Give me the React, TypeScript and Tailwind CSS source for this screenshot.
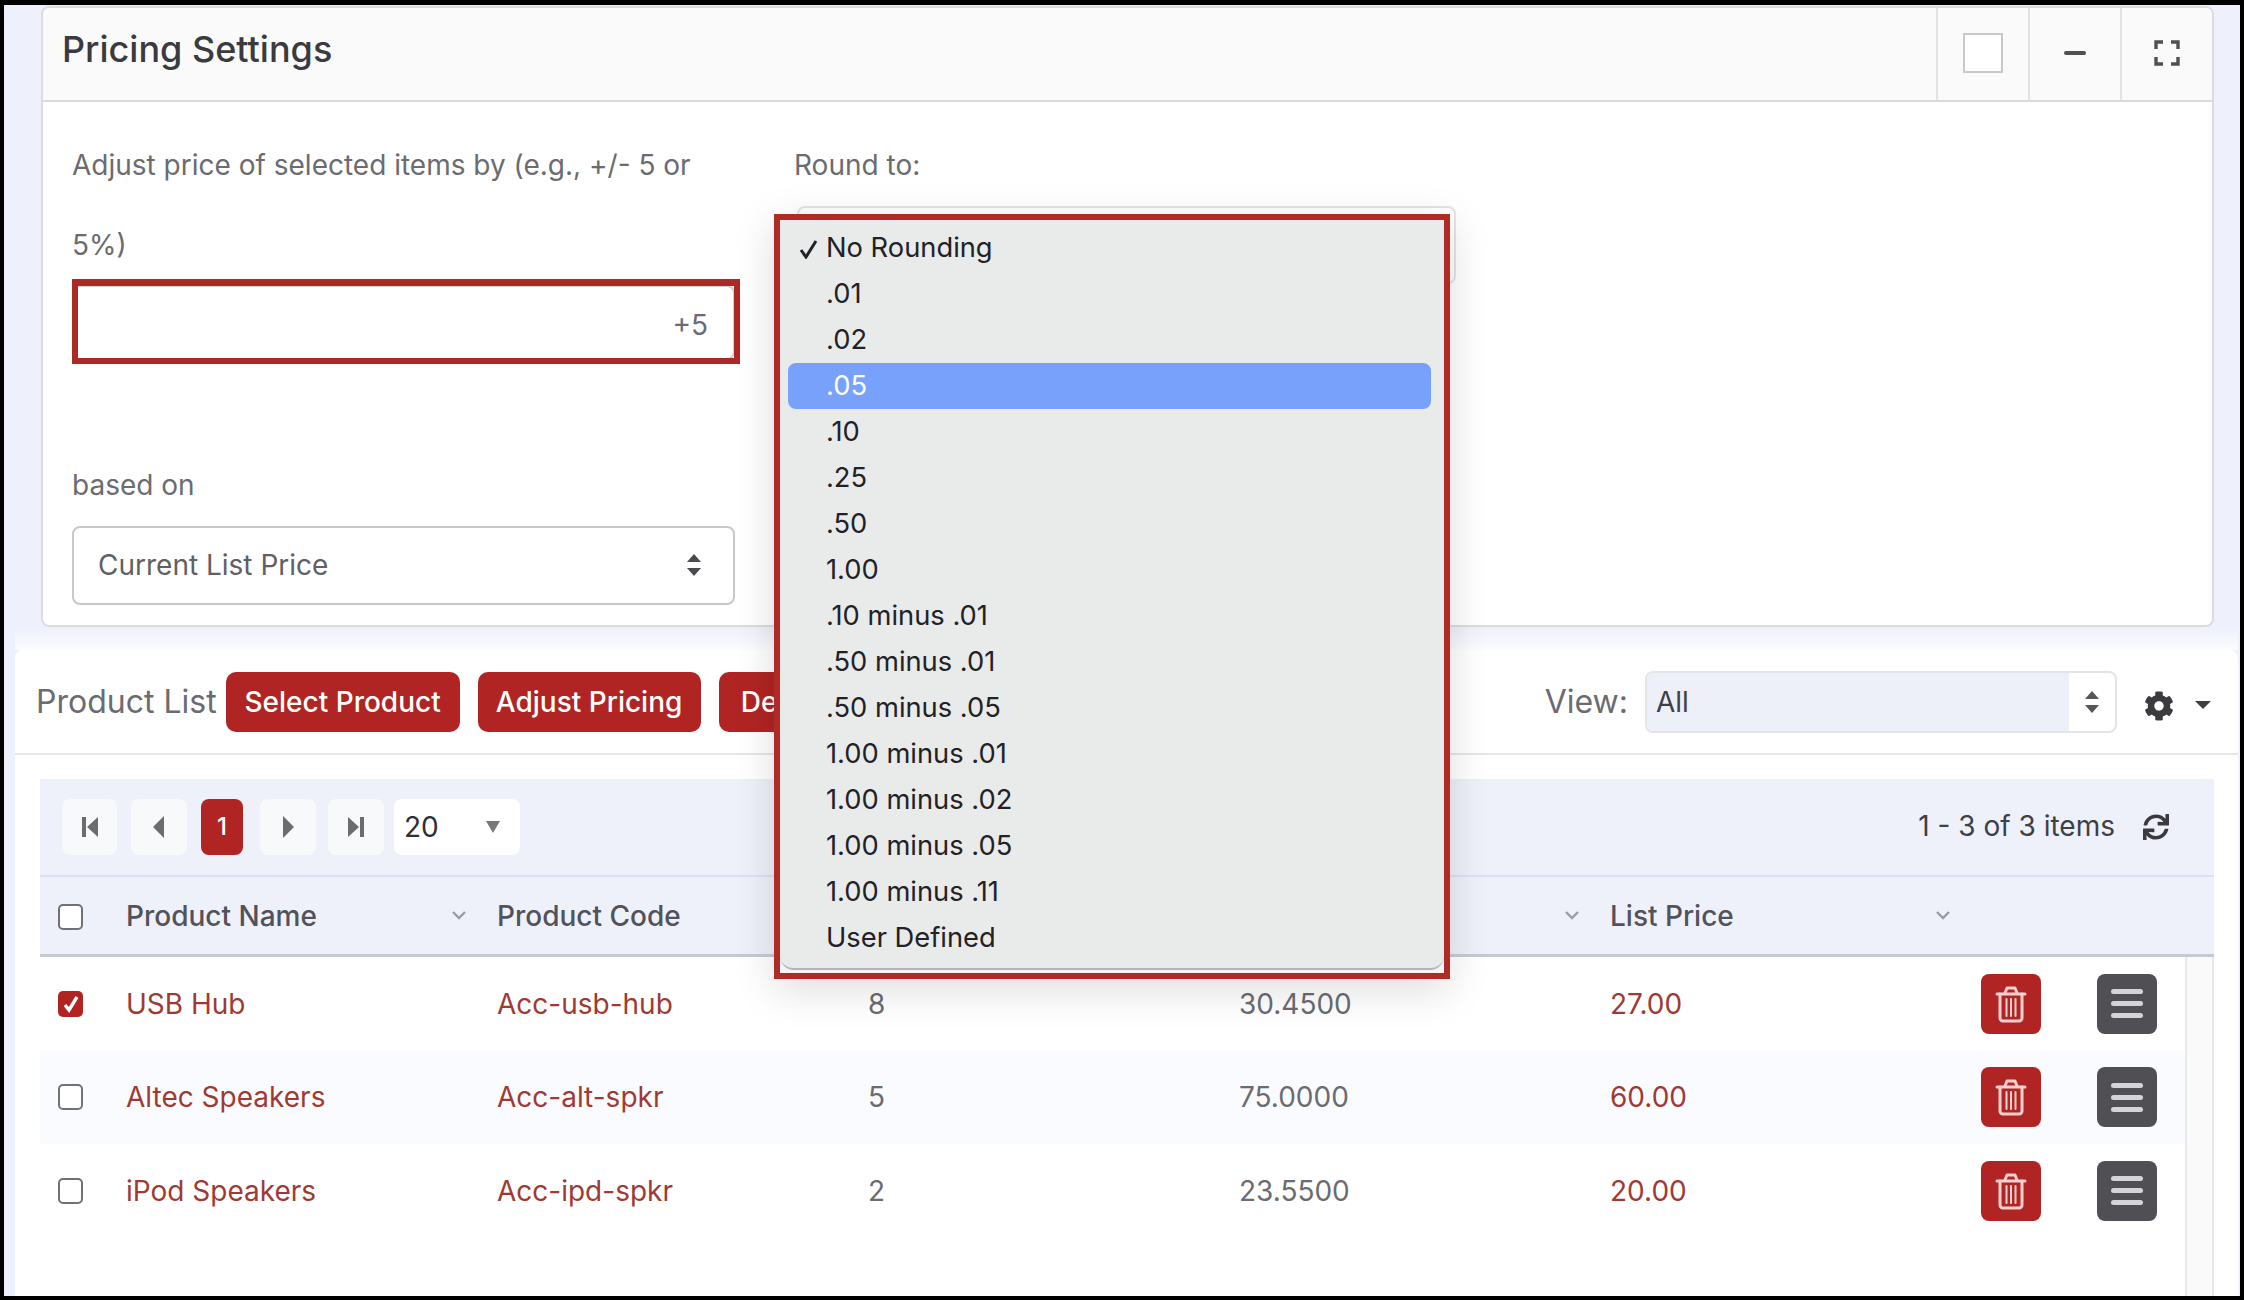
import { FaCog, FaSync } from 'react-icons/fa';

const options = [
  'No Rounding', '.01', '.02', '.05', '.10', '.25', '.50', '1.00', '.10 minus .01', '.50 minus .01',
  '.50 minus .05', '1.00 minus .01', '1.00 minus .02', '1.00 minus .05', '1.00 minus .11', 'User Defined',
];

const products = [
  { name: 'USB Hub', code: 'Acc-usb-hub', qty: '8', cost: '30.4500', price: '27.00', checked: true },
  { name: 'Altec Speakers', code: 'Acc-alt-spkr', qty: '5', cost: '75.0000', price: '60.00', checked: false },
  { name: 'iPod Speakers', code: 'Acc-ipd-spkr', qty: '2', cost: '23.5500', price: '20.00', checked: false },
];

function UpDown({ className }: { className?: string }) {
  return (
    <svg width="16" height="22" viewBox="0 0 16 22" className={className} fill="currentColor">
      <path d="M8 0l7 8H1zM8 22l-7-8h14z" />
    </svg>
  );
}

function Chevron() {
  return (
    <svg width="14" height="9" viewBox="0 0 14 9" fill="none" stroke="#9b9ba0" strokeWidth="2.4">
      <path d="M1 1l6 6 6-6" />
    </svg>
  );
}

function PagerIcon({ d }: { d: string }) {
  return (
    <svg width="20" height="22" viewBox="0 0 20 22" fill="#6b6b70">
      <path d={d} />
    </svg>
  );
}

function Checkbox({ checked }: { checked: boolean }) {
  if (checked) {
    return (
      <div className="grid h-[26px] w-[25px] place-items-center rounded-[5px] bg-[#b02523]">
        <svg width="18" height="18" viewBox="0 0 18 18" fill="none" stroke="white" strokeWidth="3.4">
          <path d="M3 10l4 5 8-13" />
        </svg>
      </div>
    );
  }
  return <div className="h-[26px] w-[25px] rounded-[5px] border-2 border-[#707075] bg-white" />;
}

function Trash() {
  return (
    <svg width="32" height="38" viewBox="0 0 32 38" fill="none" stroke="#f7d0cf" strokeWidth="3" strokeLinecap="round" strokeLinejoin="round">
      <path d="M2 9h28" />
      <path d="M10 8l2-5h8l2 5" />
      <path d="M5 9v24a3 3 0 0 0 3 3h16a3 3 0 0 0 3-3V9" />
      <path d="M11.5 14v17M16 14v17M20.5 14v17" strokeWidth="2" />
    </svg>
  );
}

export default function App() {
  return (
    <div className="relative h-[1300px] w-[2244px] overflow-hidden bg-black pb-[4px] pl-[4px] pr-[4px] pt-[5px] font-['Inter',sans-serif]">
      <div className="h-full bg-[#eef1fb] pt-[1px]">

        {/* Pricing Settings card */}
        <div className="ml-[37px] mr-[26px] h-[621px] rounded-lg border-2 border-[#dcdce0] bg-white">
          <div className="flex h-[94px] items-stretch rounded-t-lg border-b-2 border-[#d9d9dc] bg-[#fafafa]">
            <div className="flex-1 pl-[19px] pt-[19px] text-[36px] leading-[44px] font-medium text-[#3a3a3f]">Pricing Settings</div>
            <div className="grid w-[92px] place-items-center border-l-2 border-[#e2e2e4] pb-[2px]">
              <div className="h-[40px] w-[40px] border-2 border-[#c8c8c8] bg-white" />
            </div>
            <div className="grid w-[92px] place-items-center border-l-2 border-[#e2e2e4] pb-[2px]">
              <div className="h-[4px] w-[22px] rounded-sm bg-[#4f4f54]" />
            </div>
            <div className="grid w-[92px] place-items-center border-l-2 border-[#e2e2e4] pb-[2px]">
              <svg width="26" height="26" viewBox="0 0 26 26" fill="none" stroke="#4f4f54" strokeWidth="3.4">
                <path d="M2 9V2h7M17 2h7v7M24 17v7h-7M9 24H2v-7" />
              </svg>
            </div>
          </div>

          <div className="flex pl-[29px] pt-[23px] text-[28px] leading-[80px] text-[#6b6b70]">
            <div className="w-[663px]">
              <div>Adjust price of selected items by (e.g., +/- 5 or 5%)</div>
              <div className="relative flex h-[75px] items-center justify-end rounded-lg border-2 border-[#d0d0d4] bg-white pr-[25px] pt-[4px]">
                +5
                <div className="pointer-events-none absolute -bottom-[6px] -left-[2px] -right-[7px] -top-[8px] border-[6px] border-t-[7px] border-[#ac2a25]" />
              </div>
              <div className="mt-[85px]">based on</div>
              <div className="mt-[1px] flex h-[79px] items-center justify-between rounded-lg border-2 border-[#c8c8cc] bg-white pb-[2px] pl-[24px] pr-[31px] text-[#5f5f64]">
                Current List Price
                <UpDown className="text-[#4a4a4f]" />
              </div>
            </div>
            <div className="ml-[59px] w-[662px]">
              <div>Round to:</div>
              <div className="ml-[3px] mt-[1px] h-[78px] rounded-lg border-2 border-[#e4e4e6] bg-white" />
            </div>
          </div>
        </div>

        {/* fade from the page colour into the panel */}
        <div className="ml-[11px] mr-[2px] h-[23px] bg-gradient-to-b from-[#eef1fb] to-[#fbfcfe]" />

        {/* Product list panel */}
        <div className="ml-[11px] mr-[2px] rounded-t-lg bg-white">
          <div className="flex h-[105px] items-center border-b-2 border-[#e6e6e8] pl-[21px] pt-[1px] text-[28px]">
            <span className="text-[32px] text-[#6b6b70]">Product List</span>
            <button className="ml-[9px] h-[60px] w-[234px] rounded-[10px] bg-[#b02523] font-medium text-white">Select Product</button>
            <button className="ml-[18px] h-[60px] w-[223px] rounded-[10px] bg-[#b02523] font-medium text-white">Adjust Pricing</button>
            <button className="ml-[18px] h-[60px] w-[130px] rounded-[10px] bg-[#b02523] font-medium text-white">Delete</button>
            <div className="ml-auto flex items-center pr-[27px]">
              <span className="text-[32px] text-[#6b6b70]">View:</span>
              <div className="ml-[17px] flex h-[62px] w-[472px] items-stretch overflow-hidden rounded-lg border-2 border-[#e4e4e8] bg-white">
                <div className="flex flex-1 items-center bg-[#eef0f9] pl-[9px] text-[#3f3f46]">All</div>
                <div className="grid w-[46px] place-items-center">
                  <UpDown className="text-[#55555a]" />
                </div>
              </div>
              <FaCog size={30} className="ml-[27px] mt-[8px] text-[#3a3a3f]" />
              <svg width="16" height="8" viewBox="0 0 16 8" fill="#3f3f46" className="ml-[21px] mt-[6px]">
                <path d="M0 0h16L8 8z" />
              </svg>
            </div>
          </div>

          <div className="h-[541px] rounded-t-lg bg-white pl-[25px] pr-[24px] pt-[24px] text-[28px]">
            {/* pager */}
            <div className="flex h-[98px] items-center border-b-2 border-[#dde1f5] bg-[#eef1fa] pl-[22px] pr-[45px]">
              <div className="grid h-[56px] w-[55px] place-items-center rounded-lg bg-[#f8f9fb]">
                <PagerIcon d="M2 1h4v20H2zM18 1v20L7 11z" />
              </div>
              <div className="ml-[14px] grid h-[56px] w-[56px] place-items-center rounded-lg bg-[#f8f9fb]">
                <PagerIcon d="M15 0v22L4 11z" />
              </div>
              <div className="ml-[14px] grid h-[56px] w-[42px] place-items-center rounded-lg bg-[#b02523] text-[24px] font-medium text-white">1</div>
              <div className="ml-[17px] grid h-[56px] w-[56px] place-items-center rounded-lg bg-[#f8f9fb]">
                <PagerIcon d="M5 0v22l11-11z" />
              </div>
              <div className="ml-[12px] grid h-[56px] w-[56px] place-items-center rounded-lg bg-[#f8f9fb]">
                <PagerIcon d="M2 1v20l11-10zM14 1h4v20h-4z" />
              </div>
              <div className="ml-[10px] flex h-[56px] w-[126px] items-center justify-between rounded-lg bg-white pl-[10px] pr-[20px] text-[#2f2f33]">
                20
                <svg width="14" height="12" viewBox="0 0 14 12" fill="#77777c">
                  <path d="M0 0h14L7 12z" />
                </svg>
              </div>
              <span className="ml-auto mb-[3px] text-[#3f3f46]">1 - 3 of 3 items</span>
              <FaSync size={26} className="ml-[28px] text-[#3a3a3f]" />
            </div>

            {/* column headers */}
            <div className="grid h-[80px] grid-cols-[86px_371px_371px_371px_371px_371px_1fr] items-center border-b-[3px] border-[#c8cad2] bg-[#eef1fa] font-medium text-[#52525b]">
              <div className="pl-[18px] pt-[2px]"><Checkbox checked={false} /></div>
              <div className="flex items-center justify-between pr-[31px]">Product Name<Chevron /></div>
              <div>Product Code</div>
              <div />
              <div className="flex justify-end pr-[31px]"><Chevron /></div>
              <div className="flex items-center justify-between pr-[31px]">List Price<Chevron /></div>
            </div>

            {/* rows and scrollbar track */}
            <div className="flex h-[339px]">
              <div className="flex-1">
                {products.map((p, i) => (
                  <div
                    key={p.code}
                    className={`grid h-[93.5px] grid-cols-[86px_371px_371px_371px_371px_371px_1fr] items-center ${i === 1 ? 'bg-[#fafbfe]' : 'bg-white'}`}
                  >
                    <div className="pl-[18px]"><Checkbox checked={p.checked} /></div>
                    <div className="text-[#9f3a33]">{p.name}</div>
                    <div className="text-[#9f3a33]">{p.code}</div>
                    <div className="text-[#6b6b70]">{p.qty}</div>
                    <div className="text-[#6b6b70]">{p.cost}</div>
                    <div className="text-[#9f3a33]">{p.price}</div>
                    <div className="flex gap-[56px]">
                      <button className="grid h-[60px] w-[60px] place-items-center rounded-lg bg-[#b02523]"><Trash /></button>
                      <button className="flex h-[60px] w-[60px] flex-col items-center justify-center gap-[7px] rounded-lg bg-[#4f4f54]">
                        <span className="h-[5px] w-[32px] rounded-full bg-[#d4d4d8]" />
                        <span className="h-[5px] w-[32px] rounded-full bg-[#d4d4d8]" />
                        <span className="h-[5px] w-[32px] rounded-full bg-[#d4d4d8]" />
                      </button>
                    </div>
                  </div>
                ))}
              </div>
              <div className="w-[29px] border-x-2 border-[#e8e8ea] bg-[#fafafa]" />
            </div>
          </div>
        </div>
      </div>

      {/* open Round to menu with its red highlight */}
      <div className="absolute left-[774px] top-[214px] h-[765px] w-[676px] border-[6px] border-[#b02a26] bg-[#f4f4f4] shadow-[0_10px_40px_rgba(0,0,0,0.14)]">
        <div className="h-[750px] rounded-b-[14px] border-b-2 border-[#b4b4b4] bg-[#e9eaea] pl-[8px] pr-[13px] pt-[5px] text-[27.3px] text-[#222226]">
          {options.map(o => (
            <div
              key={o}
              className={`flex h-[46px] items-center rounded-lg pl-[11px] pt-[1px] ${o === '.05' ? 'bg-[#78a1fb] text-white' : ''}`}
            >
              <span className="w-[27px]">
                {o === 'No Rounding' && (
                  <svg width="20" height="20" viewBox="0 0 20 20" fill="none" stroke="#222226" strokeWidth="3">
                    <path d="M2 11l5 7L17 2" />
                  </svg>
                )}
              </span>
              {o}
            </div>
          ))}
        </div>
      </div>
    </div>
  );
}
